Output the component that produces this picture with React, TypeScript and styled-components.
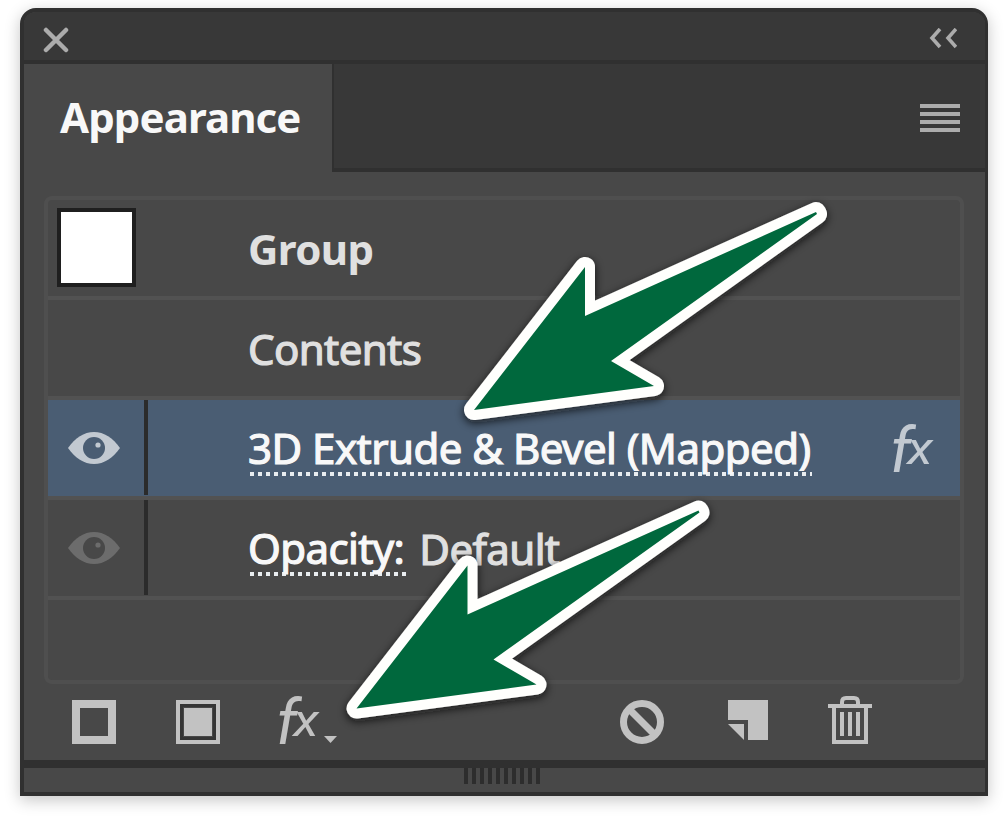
import React from "react";
import styled, { createGlobalStyle, css } from "styled-components";

const GlobalStyle = createGlobalStyle`
  * { box-sizing: border-box; }
  body {
    margin: 0;
    background: #ffffff;
    font-family: "Noto Sans", sans-serif;
    overflow: hidden;
  }
`;

const Stage = styled.main`
  position: relative;
  width: 1008px;
  height: 824px;
  padding: 8px 20px 28px;
  overflow: hidden;
`;

const Panel = styled.section`
  display: flex;
  flex-direction: column;
  width: 968px;
  height: 788px;
  border: 4px solid #303030;
  border-width: 4px 3px 4px 4px;
  border-radius: 16px 16px 0 0;
  background: #484848;
  box-shadow: 0 4px 16px rgba(0, 0, 0, 0.23);
`;

const TitleBar = styled.header`
  display: flex;
  align-items: center;
  justify-content: space-between;
  height: 52px;
  padding: 8px 28px 0 19px;
  border-bottom: 4px solid #303030;
  border-radius: 12px 12px 0 0;
  background: #383838;
`;

const TabBar = styled.nav`
  display: flex;
  height: 108px;
`;

const Tab = styled.div`
  width: 308px;
  padding-left: 36px;
  background: #484848;
  line-height: 106px;
`;

const TabRest = styled.div`
  display: flex;
  flex: 1;
  align-items: center;
  justify-content: flex-end;
  padding: 4px 25px 0 0;
  border-left: 2px solid #303030;
  border-bottom: 4px solid #303030;
  background: #383838;
`;

const Label = styled.span<{ $bold?: boolean; $spacing?: number; $bright?: boolean }>`
  font-size: 42px;
  font-weight: ${(p) => (p.$bold ? 700 : 400)};
  letter-spacing: ${(p) => p.$spacing ?? -0.6}px;
  color: ${(p) => (p.$bright ? "#f8f8f8" : "#e0e0e0")};
  white-space: pre;
  ${(p) => !p.$bold && css`-webkit-text-stroke: 1.2px currentColor;`}
`;

const LinkLabel = styled.span<{ $width: number }>`
  display: block;
  width: ${(p) => p.$width}px;
  height: 56px;
  line-height: 56px;
  white-space: nowrap;
  background: repeating-linear-gradient(90deg, #e9edf0 0 4px, transparent 4px 8px) 2px 52px / 100% 4px no-repeat;
`;

const List = styled.div`
  width: 920px;
  height: 488px;
  margin: 24px 0 0 20px;
  border: 4px solid #4f4f4f;
  border-radius: 8px;
`;

const Row = styled.div<{ $selected?: boolean }>`
  display: flex;
  align-items: center;
  height: 100px;
  border-bottom: 4px solid #525252;
  ${(p) =>
    p.$selected &&
    css`
      background: #4a5d73;
    `}
`;

const Visibility = styled.div<{ $divided?: boolean }>`
  display: flex;
  align-items: center;
  justify-content: center;
  align-self: flex-start;
  width: 100px;
  height: 95px;
  padding-right: 4px;
  ${(p) =>
    p.$divided &&
    css`
      border-right: 4px solid #2b2b2b;
    `}
`;

const Content = styled.div`
  display: flex;
  flex: 1;
  align-items: center;
  padding: 0 0 0 100px;
`;

const Swatch = styled.div`
  width: 79px;
  height: 79px;
  border: 4px solid #1f1f1f;
  background: #ffffff;
`;

const FxMark = styled.span<{ $color: string }>`
  display: flex;
  align-items: flex-start;
  width: 46px;
  height: 48px;
  font-family: Roboto, sans-serif;
  font-style: italic;
  font-weight: 400;
  color: ${(p) => p.$color};
`;

const FxF = styled.span`
  width: 19px;
  font-size: 63px;
  line-height: 50px;
`;

const FxX = styled.span`
  font-size: 46px;
  line-height: 44px;
  transform: scaleX(1.16);
`;

const FxSlot = styled.div`
  width: 70px;
  padding-top: 4px;
`;

const Toolbar = styled.footer`
  display: flex;
  align-items: center;
  height: 76px;
  padding-left: 48px;
`;

const ToolGroup = styled.div<{ $left?: number }>`
  display: flex;
  align-items: center;
  gap: 60px;
  margin-left: ${(p) => p.$left ?? 0}px;
`;

const FxTool = styled.div`
  display: flex;
  align-items: flex-end;
  width: 64px;
  height: 48px;
  margin-left: -4px;
`;

const DropCaret = styled.svg`
  margin: 0 0 1px 2px;
`;

const TrashIcon = styled.svg`
  margin-bottom: 4px;
`;

const ResizeBar = styled.div`
  display: flex;
  align-items: flex-start;
  justify-content: center;
  height: 32px;
  border-top: 8px solid #303030;
  padding-right: 5px;
`;

const Grip = styled.div`
  width: 76px;
  height: 16px;
  background: repeating-linear-gradient(90deg, #2d2d2d 0 4px, #484848 4px 8px);
`;

const Overlay = styled.svg`
  position: absolute;
  left: 0;
  top: 0;
  pointer-events: none;
`;

const Eye = ({ color, pupil }: { color: string; pupil: string }) => (
  <svg width="54" height="34" viewBox="0 0 54 34">
    <path d="M1 17C8 7 17 1 27 1S46 7 53 17C46 27 37 33 27 33S8 27 1 17Z" fill={color} />
    <circle cx="27" cy="17" r="11" fill={pupil} />
    <circle cx="31" cy="14" r="2.600" fill={color} />
  </svg>
);

const Fx = ({ color }: { color: string }) => (
  <FxMark $color={color}>
    <FxF>f</FxF>
    <FxX>x</FxX>
  </FxMark>
);

const Arrow = ({ x, y }: { x: number; y: number }) => (
  <g transform={`translate(${x} ${y})`} filter="url(#arrow-shadow)">
    <path
      d="M0 0L111 -143V-94L342 -198L343 -196L137 -49L180 -24Z"
      fill="#03683c"
      stroke="#fffffd"
      strokeWidth="20"
      strokeLinejoin="round"
    />
    <path d="M0 0L111 -143V-94L342 -198L343 -196L137 -49L180 -24Z" fill="#03683c" />
  </g>
);

export default function App() {
  return (
    <>
      <GlobalStyle />
      <Stage>
        <Panel>
          <TitleBar>
            <svg width="26" height="26" viewBox="0 0 26 26">
              <path d="M3 3L23 23M23 3L3 23" stroke="#acacac" strokeWidth="4.500" strokeLinecap="round" />
            </svg>
            <svg width="28" height="24" viewBox="0 0 28 24">
              <path d="M11 1L3 10L11 19M27 1L19 10L27 19" fill="none" stroke="#acacac" strokeWidth="3.600" />
            </svg>
          </TitleBar>
          <TabBar>
            <Tab>
              <Label $bold $bright $spacing={-0.9}>Appearance</Label>
            </Tab>
            <TabRest>
              <svg width="40" height="28" viewBox="0 0 40 28">
                <path d="M0 2H40M0 10H40M0 18H40M0 26H40" stroke="#acacac" strokeWidth="4" />
              </svg>
            </TabRest>
          </TabBar>
          <List>
            <Row>
              <Visibility>
                <Swatch />
              </Visibility>
              <Content>
                <Label $bold>Group</Label>
              </Content>
            </Row>
            <Row>
              <Visibility />
              <Content>
                <Label>Contents</Label>
              </Content>
            </Row>
            <Row $selected>
              <Visibility $divided>
                <Eye color="#c2c9d1" pupil="#4a5d73" />
              </Visibility>
              <Content>
                <LinkLabel $width={564}>
                  <Label $bright $spacing={-0.52}>3D Extrude &amp; Bevel (Mapped)</Label>
                </LinkLabel>
              </Content>
              <FxSlot>
                <Fx color="#c2c9d1" />
              </FxSlot>
            </Row>
            <Row>
              <Visibility $divided>
                <Eye color="#6c6c6c" pupil="#484848" />
              </Visibility>
              <Content>
                <LinkLabel $width={161}>
                  <Label $bright>Opacity:</Label>
                </LinkLabel>
                <Label> Default</Label>
              </Content>
            </Row>
          </List>
          <Toolbar>
            <ToolGroup>
              <svg width="44" height="44" viewBox="0 0 44 44">
                <rect x="4" y="4" width="36" height="36" fill="none" stroke="#c2c2c2" strokeWidth="8" />
              </svg>
              <svg width="44" height="44" viewBox="0 0 44 44">
                <rect x="2" y="2" width="40" height="40" fill="none" stroke="#c2c2c2" strokeWidth="4" />
                <rect x="5.500" y="5.500" width="33" height="33" fill="none" stroke="#353535" strokeWidth="3" />
                <rect x="8" y="8" width="28" height="28" fill="#c2c2c2" />
              </svg>
              <FxTool>
                <Fx color="#c2c2c2" />
                <DropCaret width="13" height="12" viewBox="0 0 13 12">
                  <path d="M0 3H13L6.500 10Z" fill="#c2c2c2" />
                </DropCaret>
              </FxTool>
            </ToolGroup>
            <ToolGroup $left={280}>
              <svg width="44" height="44" viewBox="0 0 44 44">
                <circle cx="22" cy="22" r="18.500" fill="none" stroke="#c2c2c2" strokeWidth="7" />
                <path d="M9 9L35 35" stroke="#c2c2c2" strokeWidth="7" />
              </svg>
              <svg width="44" height="44" viewBox="0 0 44 44">
                <path d="M4 0H44V40H24V20H4Z" fill="#c2c2c2" />
                <path d="M4 24H20V40Z" fill="#c2c2c2" />
              </svg>
              <TrashIcon width="44" height="48" viewBox="0 0 44 48">
                <path d="M14 9V6Q14 2 18 2H26Q30 2 30 6V9" fill="none" stroke="#c2c2c2" strokeWidth="4" />
                <path d="M0 8H44V12H0Z" fill="#c2c2c2" />
                <path d="M6 12V46H38V12" fill="none" stroke="#c2c2c2" strokeWidth="4" />
                <path d="M14 16V40M22 16V40M30 16V40" stroke="#c2c2c2" strokeWidth="4" />
              </TrashIcon>
            </ToolGroup>
          </Toolbar>
          <ResizeBar>
            <Grip />
          </ResizeBar>
        </Panel>
        <Overlay width="1008" height="824" viewBox="0 0 1008 824">
          <defs>
            <filter id="arrow-shadow" x="-15%" y="-15%" width="130%" height="130%">
              <feDropShadow dx="0" dy="3" stdDeviation="5" floodColor="#100c0c" floodOpacity="0.8" />
            </filter>
          </defs>
          <Arrow x={474} y={410} />
          <Arrow x={356.5} y={708.5} />
        </Overlay>
      </Stage>
    </>
  );
}
